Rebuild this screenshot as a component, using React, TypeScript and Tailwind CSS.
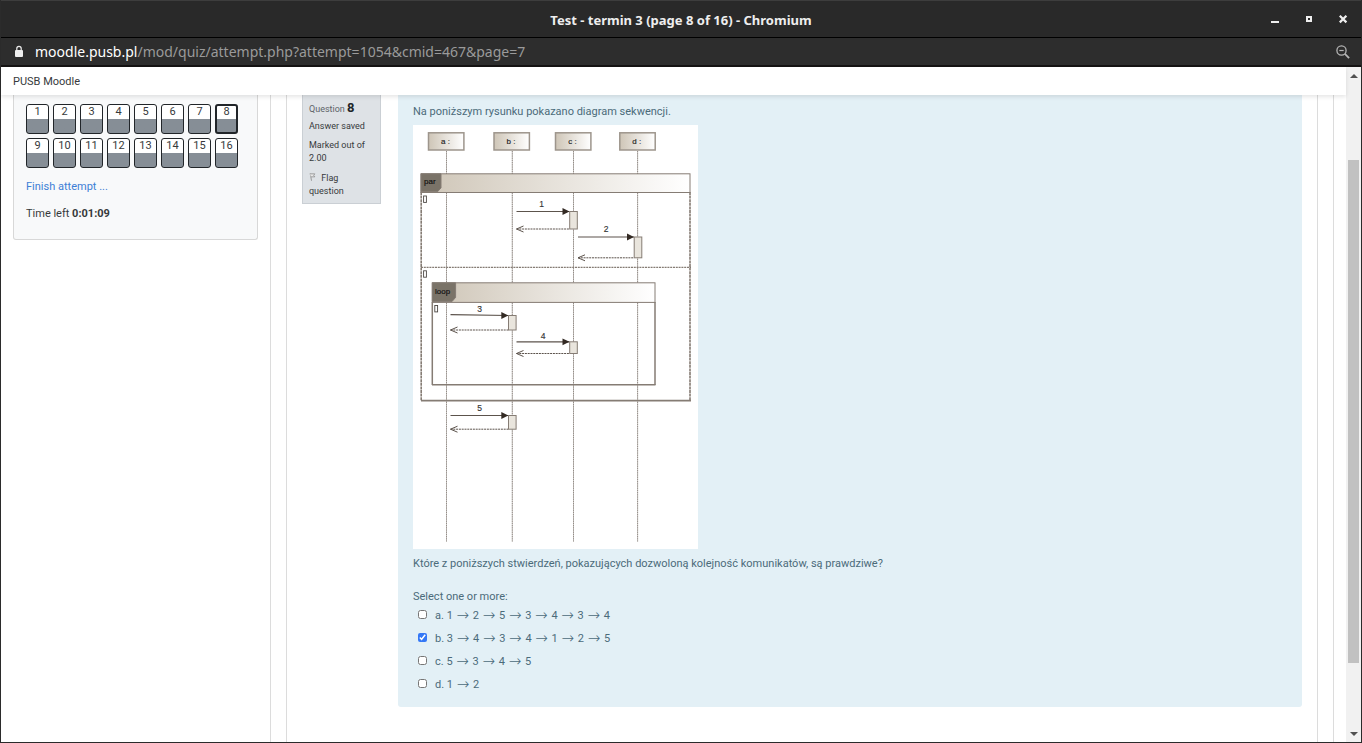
import { Fragment } from "react";

const questionNumbers = Array.from({ length: 16 }, (_, i) => i + 1);

const answers = [
  { letter: "a", steps: [1, 2, 5, 3, 4, 3, 4], checked: false },
  { letter: "b", steps: [3, 4, 3, 4, 1, 2, 5], checked: true },
  { letter: "c", steps: [5, 3, 4, 5], checked: false },
  { letter: "d", steps: [1, 2], checked: false },
];

function TitleBar() {
  return (
    <header className="grid h-[38px] grid-cols-[1fr_auto_1fr] items-center border-t border-b border-t-[#3d3d3d] border-b-black bg-[#292929]">
      <span />
      <h1 className="pt-[2px] font-['Noto_Sans',sans-serif] text-[13px] font-bold text-[#eeeeee]">
        Test - termin 3 (page 8 of 16) - Chromium
      </h1>
      <div className="flex justify-end gap-[18px] pr-[10px]">
        <button aria-label="Minimize" className="size-4">
          <svg viewBox="0 0 16 16" className="size-4">
            <rect x="4" y="10" width="8" height="2" fill="#eee" />
          </svg>
        </button>
        <button aria-label="Maximize" className="size-4">
          <svg viewBox="0 0 16 16" className="size-4">
            <path d="M5 5h6v6H5zM7 7v2h2V7z" fill="#eee" fillRule="evenodd" />
          </svg>
        </button>
        <button aria-label="Close" className="size-4">
          <svg viewBox="0 0 16 16" className="size-4">
            <path d="M4.8 4.8l6.6 6.6M11.4 4.8l-6.6 6.6" stroke="#eee" strokeWidth="2.2" />
          </svg>
        </button>
      </div>
    </header>
  );
}

function AddressBar() {
  return (
    <div className="flex h-[29px] items-center border-b-2 border-[#151313] bg-[#2d2d2d] pr-[11px] pl-[13px] font-['Noto_Sans',sans-serif] text-[14px] text-[#9a9a9a]">
      <svg viewBox="0 0 10 13" className="mr-[11px] h-[13px] w-[10px]" aria-hidden="true">
        <rect x="1" y="5" width="8" height="7" rx="1" fill="#eee" />
        <path d="M2.8 5.5V3.6a2.2 2.2 0 0 1 4.4 0v1.9" fill="none" stroke="#eee" strokeWidth="1.2" />
      </svg>
      <p className="flex-1 whitespace-nowrap">
        <span className="text-white">moodle.pusb.pl</span>
        /mod/quiz/attempt.php?attempt=1054&amp;cmid=467&amp;page=7
      </p>
      <button aria-label="Zoom out">
        <svg viewBox="0 0 14 14" className="size-[14px]" fill="none" stroke="#b5b5b5">
          <circle cx="5.5" cy="5.5" r="4.6" strokeWidth="1.3" />
          <path d="M3.3 5.5h4.4" strokeWidth="1.2" />
          <path d="M8.9 8.9l4.2 4.2" strokeWidth="1.8" />
        </svg>
      </button>
    </div>
  );
}

function QuizNavigation() {
  return (
    <section className="rounded-b-[3px] border border-t-0 border-[#d8d8d8] bg-[#f8f9fa] px-3 pt-[9px] pb-[17px]">
      <nav className="flex flex-wrap gap-1">
        {questionNumbers.map((n) => (
          <a
            key={n}
            href={`#q${n}`}
            aria-current={n === 8 ? "page" : undefined}
            className={
              n === 8
                ? "h-[30px] w-[23px] rounded-[3px] border-2 border-[#212529] bg-linear-to-b from-white from-50% to-[#868e96] to-50% text-center leading-[11px]"
                : "h-[30px] w-[23px] rounded-[3px] border border-[#212529] bg-linear-to-b from-white from-50% to-[#868e96] to-50% text-center leading-[13px]"
            }
          >
            {n}
          </a>
        ))}
      </nav>
      <a href="#finish" className="mt-[10px] block text-[#3d7fd6]">
        Finish attempt ...
      </a>
      <p className="mt-[10px]">
        Time left <strong>0:01:09</strong>
      </p>
    </section>
  );
}

function QuestionInfo() {
  return (
    <aside className="w-[79px] self-start border border-t-0 border-[#cacfd4] bg-[#dee2e6] px-[6px] pt-1 pb-[5px] text-[9px] leading-[13px]">
      <h2 className="leading-[18px] text-[#5d6368]">
        Question <strong className="text-[13px] text-[#212529]">8</strong>
      </h2>
      <p className="mt-[2px]">Answer saved</p>
      <p className="mt-[6px]">Marked out of 2.00</p>
      <button className="mt-[7px] text-left">
        <svg viewBox="0 0 12 10" className="mr-0 inline-block h-[10px] w-[10px] align-[-1px]" aria-hidden="true">
          <path d="M1.5 1L3 9.5" stroke="#999" strokeWidth="1.2" />
          <path d="M1 1.2h6L5.6 3 7 4.8H2.4" fill="#e8e8e8" stroke="#888" strokeWidth=".9" />
        </svg>{" "}
        Flag question
      </button>
    </aside>
  );
}

const lifelines = [
  { name: "a :", x: 33.5, left: 15.5 },
  { name: "b :", x: 99.3, left: 81 },
  { name: "c :", x: 160.5, left: 142.5 },
  { name: "d :", x: 224.6, left: 206.8 },
];

const messages = [
  { n: 1, x1: 103.5, x2: 156.5, y: 86.5, h: 17.5, tx: 128.5, ty: 81.5 },
  { n: 2, x1: 165, x2: 221, y: 112, h: 20.8, tx: 193, ty: 107 },
  { n: 3, x1: 37.5, x2: 95.3, y: 190.5, h: 14.5, tx: 66.6, ty: 187 },
  { n: 4, x1: 103.5, x2: 156.5, y: 216.8, h: 11.7, tx: 130, ty: 213.5 },
  { n: 5, x1: 37.5, x2: 95.3, y: 290.5, h: 13.7, tx: 66.6, ty: 285.5 },
];

function SequenceDiagram() {
  return (
    <svg
      viewBox="0 0 285 424"
      className="mt-[5px] h-[424px] w-[285px] bg-white font-['Liberation_Sans',sans-serif]"
      role="img"
      aria-label="Diagram sekwencji"
    >
      <defs>
        <linearGradient id="shade">
          <stop offset="0" stopColor="#cfc6b8" />
          <stop offset=".1" stopColor="#d3cbbe" />
          <stop offset="1" stopColor="#fff" />
        </linearGradient>
      </defs>
      {lifelines.map((l) => (
        <g key={l.name}>
          <path d={`M${l.x} 26V416.5`} stroke="#d2cfcc" />
          <path d={`M${l.x} 26V416.5`} stroke="#938c87" strokeDasharray="1.3 .9" />
          <rect x={l.left} y="7.8" width="35.4" height="17.2" fill="url(#shade)" stroke="#9d958c" strokeWidth="1.5" />
          <text x={l.left + 17} y="18.5" fontSize="8" textAnchor="middle" fill="#222" stroke="#222" strokeWidth=".15">
            {l.name}
          </text>
        </g>
      ))}
      <g stroke="#857c74">
        <rect x="8" y="48.8" width="269" height="18.7" fill="url(#shade)" />
        <path d="M8 48.8h20v14l-3.5 4H8z" fill="#7a7368" />
        <path d="M8.2 67v208.6M277 67v208.6" strokeWidth="1.6" strokeDasharray="3 .6" />
        <path d="M8 275.6h270" strokeWidth="1.6" />
        <path d="M8 142.4h270" strokeWidth="1.4" strokeDasharray="2 .8" />
        <rect x="19.3" y="157.8" width="222.7" height="19.6" fill="url(#shade)" />
        <path d="M19.3 157.8h23.3v14.6l-3.5 4H19.3z" fill="#7a7368" />
        <path d="M19.3 177v83M242 177v83" strokeWidth="1.5" />
        <path d="M19 259.8h223.5" strokeWidth="1.6" />
      </g>
      <g fontSize="8" fill="#111" stroke="#111" strokeWidth=".15">
        <text x="11" y="59">par</text>
        <text x="22" y="168.5">loop</text>
      </g>
      <g fill="none" stroke="#4c4743" strokeWidth=".9">
        <rect x="10.6" y="71" width="2.8" height="6.4" />
        <rect x="10.6" y="145.8" width="2.8" height="6.4" />
        <rect x="21.8" y="180.5" width="2.8" height="6.4" />
      </g>
      {messages.map((m) => (
        <g key={m.n} stroke="#5c534c">
          <path d={`M${m.x1} ${m.n === 3 ? m.y - 0.8 : m.y}L${m.x2} ${m.y}`} strokeWidth="1.2" />
          <path d={`M${m.x2} ${m.y}l-7 -3.4v6.8z`} fill="#332a24" stroke="none" />
          <path d={`M${m.x1} ${m.y + m.h}H${m.x2}`} strokeDasharray="2 .8" />
          <path d={`M${m.x1 + 7} ${m.y + m.h - 3}l-7 3l7 3`} fill="none" />
          <rect x={m.x2 + 0.2} y={m.y} width="7.6" height={m.h} fill="#e9e5dd" stroke="#857c74" />
          <text x={m.tx} y={m.ty} fontSize="8.5" textAnchor="middle" fill="#333" stroke="#333" strokeWidth=".15">
            {m.n}
          </text>
        </g>
      ))}
    </svg>
  );
}

function QuestionBody() {
  return (
    <section className="ml-[17px] flex-1 self-start rounded-b-[3px] bg-[#e3f0f6] px-[15px] pt-2 pb-[11px] text-[#4b6b7a]">
      <p>Na poniższym rysunku pokazano diagram sekwencji.</p>
      <SequenceDiagram />
      <p className="mt-[6px]">
        Które z poniższych stwierdzeń, pokazujących dozwoloną kolejność komunikatów, są prawdziwe?
      </p>
      <fieldset className="mt-4">
        <legend className="h-4">Select one or more:</legend>
        {answers.map((a) => (
          <label key={a.letter} className="flex h-[23px] items-center">
            <input
              type="checkbox"
              defaultChecked={a.checked}
              className="mr-2 mb-[2px] ml-[5px] size-[9px] accent-[#3478f6]"
            />
            <span className="flex items-center whitespace-pre">
              {a.letter}.{" "}
              {a.steps.map((s, i) => (
                <Fragment key={i}>
                  {i > 0 && (
                    <span className="w-5 text-center font-['DejaVu_Sans',sans-serif] text-[15px] font-extralight">→</span>
                  )}
                  <span>{s}</span>
                </Fragment>
              ))}
            </span>
          </label>
        ))}
      </fieldset>
    </section>
  );
}

function Scrollbar() {
  return (
    <div className="flex w-[15px] flex-col items-center bg-[#f1f1f1]">
      <button aria-label="Scroll up" className="flex h-[17px] items-center">
        <svg viewBox="0 0 8 4" className="h-1 w-2"><path d="M0 4l4-4 4 4z" fill="#505050" /></svg>
      </button>
      <div className="grow-[76]" />
      <div className="w-[11px] grow-[503] bg-[#c1c1c1]" />
      <div className="grow-[62]" />
      <button aria-label="Scroll down" className="flex h-[17px] items-center">
        <svg viewBox="0 0 8 4" className="h-1 w-2"><path d="M0 0l4 4 4-4z" fill="#505050" /></svg>
      </button>
    </div>
  );
}

export default function App() {
  return (
    <div className="flex min-h-screen flex-col border-x border-b border-[#2b2b2b] bg-white font-[Roboto,sans-serif] text-[11px] leading-[17px] text-[#373a3c]">
      <TitleBar />
      <AddressBar />
      <div className="flex flex-1">
        <div className="flex flex-1 flex-col">
          <div className="z-10 h-7 bg-white px-3 leading-[30px] shadow-[0_2px_4px_rgba(0,0,0,0.1)]">
            <a href="#home">PUSB Moodle</a>
          </div>
          <main className="flex flex-1">
            <div className="w-[270px] border-r border-[#dcdcdc] px-3">
              <QuizNavigation />
            </div>
            <div className="ml-[15px] flex flex-1 border-x border-[#dcdcdc] px-[15px]">
              <QuestionInfo />
              <QuestionBody />
            </div>
            <div className="ml-[15px] w-[13px] border-l border-[#dcdcdc]" />
          </main>
        </div>
        <Scrollbar />
      </div>
    </div>
  );
}
